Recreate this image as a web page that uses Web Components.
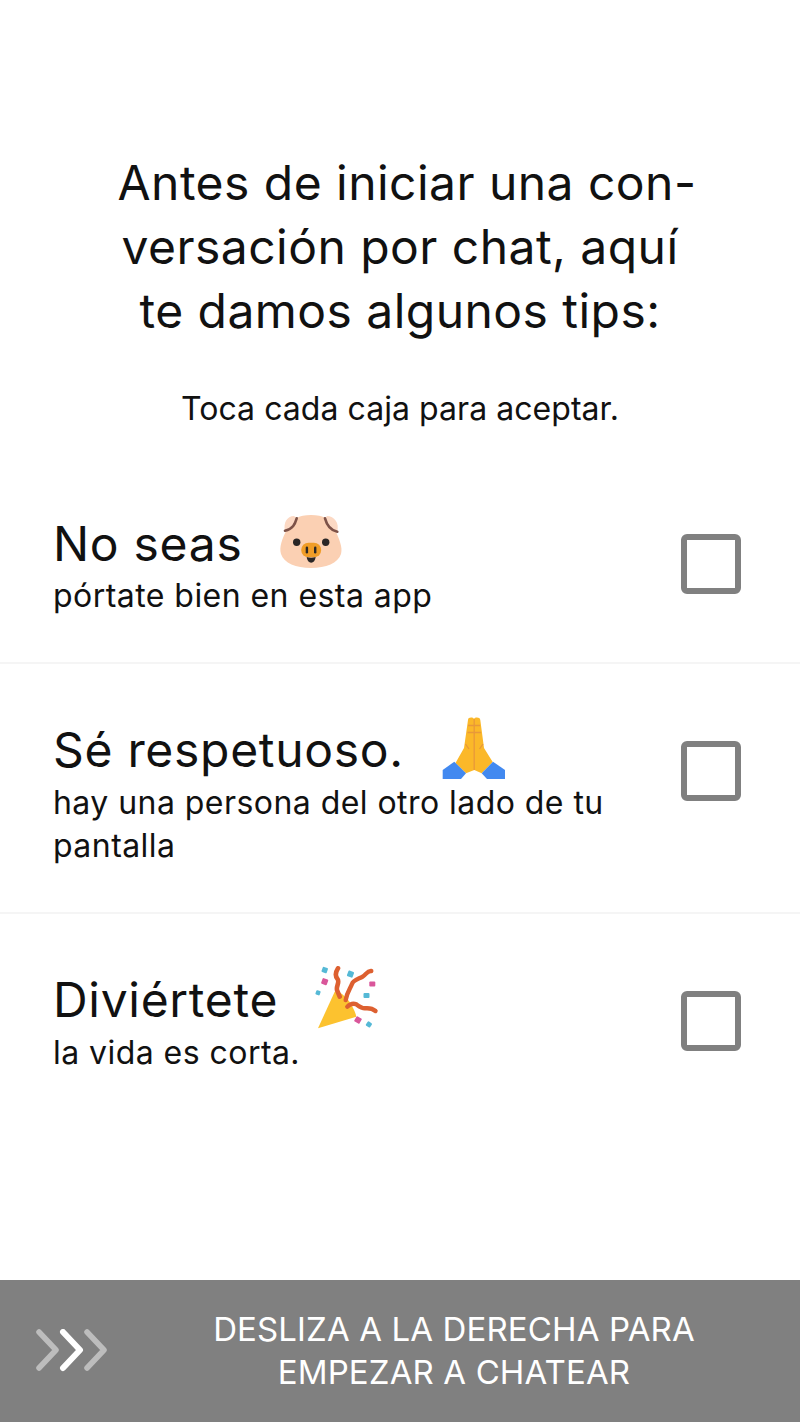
<!DOCTYPE html>
<html lang="es">
<head>
<meta charset="utf-8">
<title>Tips</title>
<style>
  html, body { margin: 0; padding: 0; background: #fff; }
  body { font-family: "Inter", "Noto Sans", sans-serif; color: #111; }
</style>
</head>
<body>
<tips-screen>
  <tips-intro>
    <span slot="title">Antes de iniciar una con-<br>versación por chat, aquí<br>te damos algunos tips:</span>
    <span slot="hint">Toca cada caja para aceptar.</span>
  </tips-intro>
  <tip-row>
    <span slot="title">No seas</span>
    <emoji-pig slot="emoji"></emoji-pig>
    pórtate bien en esta app
  </tip-row>
  <tip-row>
    <span slot="title">Sé respetuoso.</span>
    <emoji-praying slot="emoji"></emoji-praying>
    hay una persona del otro lado de tu pantalla
  </tip-row>
  <tip-row last>
    <span slot="title">Diviértete</span>
    <emoji-party slot="emoji"></emoji-party>
    la vida es corta.
  </tip-row>
</tips-screen>
<script>
const pigSvg = `<svg viewBox="0 0 66 58" width="66" height="58">
  <path d="M32 2C20 2 12 6 8 16C3 26 0 34 2 41C5 50 17 55 32 55C47 55 59 50 62 41C64 34 60 26 56 16C52 6 44 2 32 2Z" fill="#fbd0b3"/>
  <path d="M6 18C4 10 8 3 15 3L18 5C17 11 13 16 6 18Z" fill="#fcd9c4"/>
  <path d="M58 19C61 10 55 3 48 3L46 5C47 11 51 17 58 19Z" fill="#fcd9c4"/>
  <path d="M17.7 5.3C16 11 14 16 6 17.7M46 5.3C47.5 11 50 17 58.3 18.7" fill="none" stroke="#7d5248" stroke-width="2.6" stroke-linecap="round"/>
  <circle cx="17.7" cy="29.3" r="3.7" fill="#2a2626"/>
  <circle cx="46.7" cy="29.3" r="3.7" fill="#2a2626"/>
  <rect x="22.2" y="29.7" width="20" height="14.6" rx="7.3" fill="#f09d28"/>
  <rect x="26.7" y="33.5" width="2.4" height="7" rx="1.2" fill="#2a2626"/>
  <rect x="35" y="33.5" width="2.4" height="7" rx="1.2" fill="#2a2626"/>
  <path d="M27.7 44C30 45 34 45 36.7 44C36.3 47.5 34.5 49.7 32.2 49.7C30 49.7 28 47.5 27.7 44Z" fill="#2a2626"/>
</svg>`

const prayingSvg = `<svg viewBox="0 0 66 64" width="66" height="64">
  <path d="M27 4C27 1 32 1 33 3C34 1 39 1 39.3 4L43 32L51.7 46L40.7 57.3L33.3 54L25 57.3L14.5 47L23 32Z" fill="#fbb829"/>
  <path d="M33.2 3V54M27 9.5H39M26.5 16.5H40M24.5 28L28 33M42 28L38.5 33" fill="none" stroke="#e8983a" stroke-width="1.3"/>
  <path d="M1.7 54L13.3 45.7L25 57.3L20 63H1.7Z" fill="#4289f0"/>
  <path d="M64 54L52 45.7L40.7 57.3L46 63H64Z" fill="#4289f0"/>
</svg>`

const partySvg = `<svg viewBox="0 0 66 66" width="66" height="66">
  <path d="M19.7 25.7L3 62.3L41.3 50.7C40 44 34 33 27 28C24 26 21 24.5 19.7 25.7Z" fill="#fcc22f"/>
  <path d="M23 2.3C20 7 20 10 22.5 13C25 16 21 20 22 24L24.7 30.7" fill="none" stroke="#dd6030" stroke-width="4.6" stroke-linecap="round"/>
  <path d="M56.3 5C52 4.5 51 9 47.5 10.7C43 13 38 14 37 18C35 23 32 26 30.7 34" fill="none" stroke="#dd6030" stroke-width="4.4" stroke-linecap="round"/>
  <path d="M32.3 40.7C35 38 38 37 41.3 38.3C45 41 47 42.5 50 42.3C53 42 57 42 60.5 45" fill="none" stroke="#dd6030" stroke-width="4.4" stroke-linecap="round"/>
  <g fill="#55b9d6">
    <rect x="7" y="1.3" width="5.5" height="5.5" rx="1" transform="rotate(20 9.7 4)"/>
    <rect x="0.8" y="24.5" width="4.5" height="4.5" rx="1" transform="rotate(20 3 26.7)"/>
    <rect x="32.5" y="5" width="6" height="6" rx="1" transform="rotate(20 35.3 8)"/>
    <rect x="48.5" y="27" width="6" height="5" rx="1"/>
    <rect x="51.5" y="56" width="5" height="5" rx="1" transform="rotate(35 54 58.3)"/>
  </g>
  <g fill="#d9569a">
    <rect x="6.7" y="12.7" width="6" height="6" rx="1" transform="rotate(20 9.7 15.7)"/>
    <rect x="54.3" y="15.5" width="6" height="5" rx="1"/>
    <rect x="40" y="51" width="6" height="6" rx="1" transform="rotate(30 43 54)"/>
  </g>
</svg>`

class TipsScreen extends HTMLElement {
  constructor() {
    super()
    this.attachShadow({mode: 'open'})
    this.shadowRoot.innerHTML = `
    <style>
      :host { display: flex; flex-direction: column; width: 800px; height: 1422px; background: #fff; }
      main { flex: 1; }
    </style>
    <main><slot></slot></main>
    <swipe-bar></swipe-bar>`
  }
}

class TipsIntro extends HTMLElement {
  constructor() {
    super()
    this.attachShadow({mode: 'open'})
    this.shadowRoot.innerHTML = `
    <style>
      :host { display: block; padding: 151px 0 26px; text-align: center; }
      /* the first line sits a little right of centre in the original */
      h1 { margin: 0; font-size: 48px; font-weight: 400; line-height: 64px; letter-spacing: .46px; text-indent: 14px; }
      p { margin: 44px 0 0; font-size: 32px; line-height: 44px; letter-spacing: .05px; }
    </style>
    <h1><slot name="title"></slot></h1>
    <p><slot name="hint"></slot></p>`
  }
}

class TipRow extends HTMLElement {
  constructor() {
    super()
    this.attachShadow({mode: 'open'})
    this.shadowRoot.innerHTML = `
    <style>
      :host { display: grid; grid-template-columns: 1fr 60px; column-gap: 40px; padding: 55px 59px 44px 53px; border-bottom: 2px solid #f5f5f5; }
      :host([last]) { border-bottom: 0; }
      .title { display: flex; align-items: center; height: 62px; font-size: 48px; letter-spacing: .7px; }
      .emoji { display: flex; margin-left: 37px; }
      .sub { font-size: 32px; line-height: 43.5px; letter-spacing: .45px; }
      tip-check { margin-top: 22px; }
    </style>
    <div>
      <div class="title"><slot name="title"></slot><span class="emoji"><slot name="emoji"></slot></span></div>
      <div class="sub"><slot></slot></div>
    </div>
    <tip-check></tip-check>`
  }
}

class TipCheck extends HTMLElement {
  constructor() {
    super()
    this.attachShadow({mode: 'open'})
    this.shadowRoot.innerHTML = `
    <style>
      :host { display: block; box-sizing: border-box; width: 60px; height: 60px; border: 6px solid #808080; border-radius: 6px; }
    </style>`
  }
}

class SwipeBar extends HTMLElement {
  constructor() {
    super()
    this.attachShadow({mode: 'open'})
    this.shadowRoot.innerHTML = `
    <style>
      :host { display: grid; grid-template-columns: 108px 1fr; align-items: center; height: 142px; background: #808080; color: #fff; }
      svg { display: block; margin-left: 36px; }
      p { margin: 0; font-size: 33px; line-height: 43px; letter-spacing: .12px; text-align: center; }
    </style>
    <svg viewBox="0 0 72 44" width="72" height="44">
      <g fill="none" stroke-linecap="round" stroke-linejoin="round">
        <path d="M3 3L20 21L3 39M51 3L68 21L51 39" stroke="#bdbdbd" stroke-width="5.5"/>
        <path d="M27 3L44 21L27 39" stroke="#fff" stroke-width="6"/>
      </g>
    </svg>
    <p>DESLIZA A LA DERECHA PARA<br>EMPEZAR A CHATEAR</p>`
  }
}

const emojiEl = (svg, lift) => class extends HTMLElement {
  constructor() {
    super()
    this.attachShadow({mode: 'open'})
    this.shadowRoot.innerHTML = `<style>:host { display: block; margin-bottom: ${lift}px; } svg { display: block; }</style>${svg}`
  }
}

customElements.define('tips-screen', TipsScreen)
customElements.define('tips-intro', TipsIntro)
customElements.define('tip-row', TipRow)
customElements.define('tip-check', TipCheck)
customElements.define('swipe-bar', SwipeBar)
customElements.define('emoji-pig', emojiEl(pigSvg, 2))
customElements.define('emoji-praying', emojiEl(prayingSvg, 4))
customElements.define('emoji-party', emojiEl(partySvg, 2))
</script>
</body>
</html>
